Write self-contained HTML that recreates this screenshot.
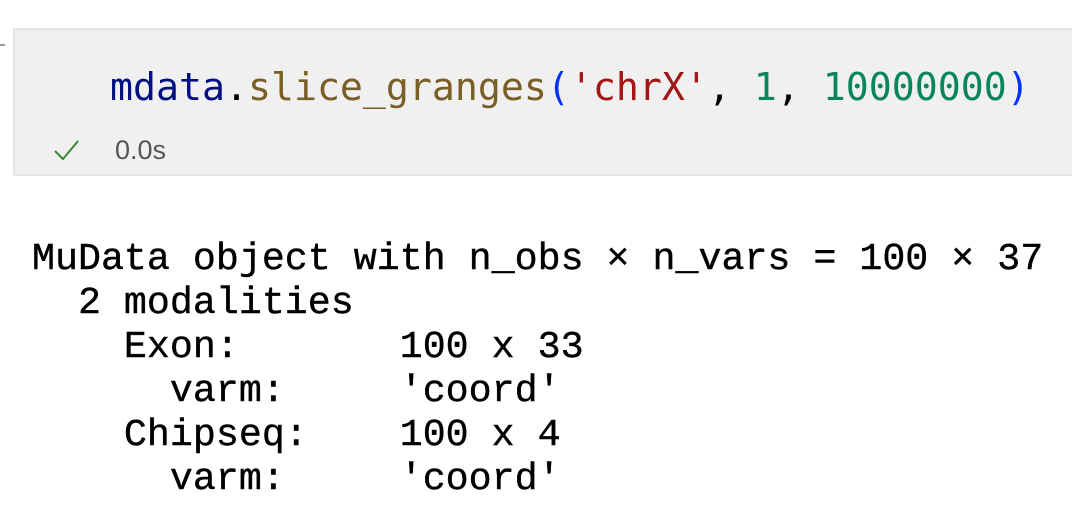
<!DOCTYPE html>
<html><head><style>
body{margin:0;width:1072px;height:522px;background:#fff;position:relative;overflow:hidden}
.cell{position:absolute;left:13px;top:28px;width:1070px;height:148px;background:#f0f0f0;border:2px solid #e3e3e3;box-sizing:border-box}
.code{position:absolute;left:110px;top:63px;font-family:"DejaVu Sans Mono","Liberation Mono",monospace;font-size:38.2px;line-height:50px;white-space:pre;color:#000}
.t{position:absolute;left:115px;top:135px;font-family:"Liberation Sans",sans-serif;font-size:27px;color:#555}
.out{position:absolute;left:32px;top:237px;font-family:"Liberation Mono",monospace;font-size:38.3px;line-height:44px;white-space:pre;color:#000;-webkit-text-stroke:0.4px #000}
</style></head><body>
<div style="position:absolute;left:0;top:44px;width:5px;height:2px;background:#999"></div>
<div class="cell"></div>
<div class="code"><span style="color:#001080">mdata</span>.<span style="color:#795e26">slice_granges</span><span style="color:#0431fa">(</span><span style="color:#a31515">'chrX'</span>, <span style="color:#098658">1</span>, <span style="color:#098658">10000000</span><span style="color:#0431fa">)</span></div>
<svg style="position:absolute;left:53px;top:137px" width="28" height="26"><path d="M2 14 L10 22 L25 4" fill="none" stroke="#388a34" stroke-width="2"/></svg>
<div class="t">0.0s</div>
<div class="out">MuData object with n_obs × n_vars = 100 × 37
  2 modalities
    Exon:       100 x 33
      varm:     'coord'
    Chipseq:    100 x 4
      varm:     'coord'</div>
</body></html>
